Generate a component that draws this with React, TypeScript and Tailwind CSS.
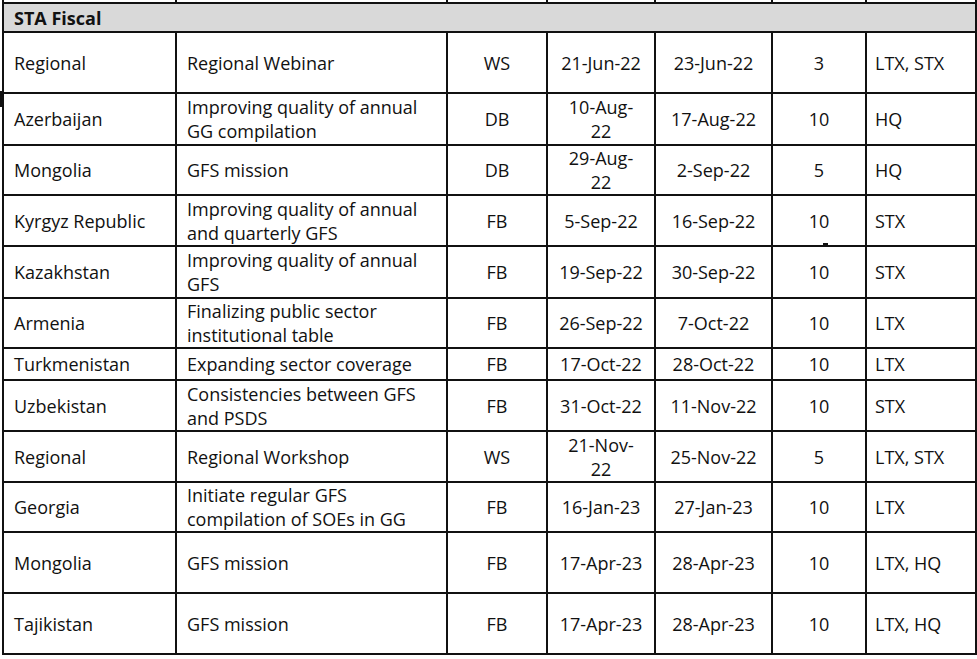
import React from "react";

type Row = {
  country: string;
  desc: string[];
  type: string;
  start: string[];
  end: string;
  days: string;
  who: string;
  h: string;
};

const rows: Row[] = [
  { country: "Regional", desc: ["Regional Webinar"], type: "WS", start: ["21-Jun-22"], end: "23-Jun-22", days: "3", who: "LTX, STX", h: "h-[61px]" },
  { country: "Azerbaijan", desc: ["Improving quality of annual", "GG compilation"], type: "DB", start: ["10-Aug-", "22"], end: "17-Aug-22", days: "10", who: "HQ", h: "h-[52px]" },
  { country: "Mongolia", desc: ["GFS mission"], type: "DB", start: ["29-Aug-", "22"], end: "2-Sep-22", days: "5", who: "HQ", h: "h-[50px]" },
  { country: "Kyrgyz Republic", desc: ["Improving quality of annual", "and quarterly GFS"], type: "FB", start: ["5-Sep-22"], end: "16-Sep-22", days: "10", who: "STX", h: "h-[51px]" },
  { country: "Kazakhstan", desc: ["Improving quality of annual", "GFS"], type: "FB", start: ["19-Sep-22"], end: "30-Sep-22", days: "10", who: "STX", h: "h-[52px]" },
  { country: "Armenia", desc: ["Finalizing public sector", "institutional table"], type: "FB", start: ["26-Sep-22"], end: "7-Oct-22", days: "10", who: "LTX", h: "h-[50px]" },
  { country: "Turkmenistan", desc: ["Expanding sector coverage"], type: "FB", start: ["17-Oct-22"], end: "28-Oct-22", days: "10", who: "LTX", h: "h-[32px]" },
  { country: "Uzbekistan", desc: ["Consistencies between GFS", "and PSDS"], type: "FB", start: ["31-Oct-22"], end: "11-Nov-22", days: "10", who: "STX", h: "h-[51px]" },
  { country: "Regional", desc: ["Regional Workshop"], type: "WS", start: ["21-Nov-", "22"], end: "25-Nov-22", days: "5", who: "LTX, STX", h: "h-[51px]" },
  { country: "Georgia", desc: ["Initiate regular GFS", "compilation of SOEs in GG"], type: "FB", start: ["16-Jan-23"], end: "27-Jan-23", days: "10", who: "LTX", h: "h-[50px]" },
  { country: "Mongolia", desc: ["GFS mission"], type: "FB", start: ["17-Apr-23"], end: "28-Apr-23", days: "10", who: "LTX, HQ", h: "h-[61px]" },
  { country: "Tajikistan", desc: ["GFS mission"], type: "FB", start: ["17-Apr-23"], end: "28-Apr-23", days: "10", who: "LTX, HQ", h: "h-[61px]" },
];

const cell = "border-2 border-[#111] align-middle p-0 whitespace-nowrap leading-[24px]";

export default function App() {
  return (
    <div
      className="relative w-[977px] h-[659px] bg-white overflow-hidden text-[#111] text-[18px]"
      style={{ fontFamily: '"Open Sans", "Noto Sans", "DejaVu Sans", sans-serif' }}
    >
      <table className="ml-[2px] mt-[-1px] w-[973px] table-fixed border-collapse">
        <colgroup>
          <col className="w-[173px]" />
          <col className="w-[271px]" />
          <col className="w-[100px]" />
          <col className="w-[108px]" />
          <col className="w-[117px]" />
          <col className="w-[94px]" />
          <col className="w-[110px]" />
        </colgroup>
        <tbody>
          <tr className="h-[4px]">
            {[0, 1, 2, 3, 4, 5, 6].map((i) => (
              <td key={i} className="border-x-2 border-b-2 border-[#111] p-0 text-[0px] leading-[0px]" />
            ))}
          </tr>
          <tr className="h-[29px]">
            <td colSpan={7} className={`${cell} bg-[#d9d9d9] pl-[10px] font-bold`}>
              STA Fiscal
            </td>
          </tr>
          {rows.map((r, i) => (
            <tr key={i} className={r.h}>
              <td className={`${cell} pl-[10px]`}>{r.country}</td>
              <td className={`${cell} pl-[10px]`}>
                {r.desc.map((d, j) => (
                  <div key={j}>{d}</div>
                ))}
              </td>
              <td className={`${cell} text-center`}>{r.type}</td>
              <td className={`${cell} text-center`}>
                {r.start.map((d, j) => (
                  <div key={j}>{d}</div>
                ))}
              </td>
              <td className={`${cell} text-center`}>{r.end}</td>
              <td className={`${cell} text-center`}>{r.days}</td>
              <td className={`${cell} pl-[8px]`}>{r.who}</td>
            </tr>
          ))}
        </tbody>
      </table>
      <span className="absolute left-0 top-[91px] h-[16px] w-[2px] bg-[#111]" />
      <span className="absolute left-[823px] top-[243px] h-[3px] w-[5px] bg-[#111]" />
    </div>
  );
}
